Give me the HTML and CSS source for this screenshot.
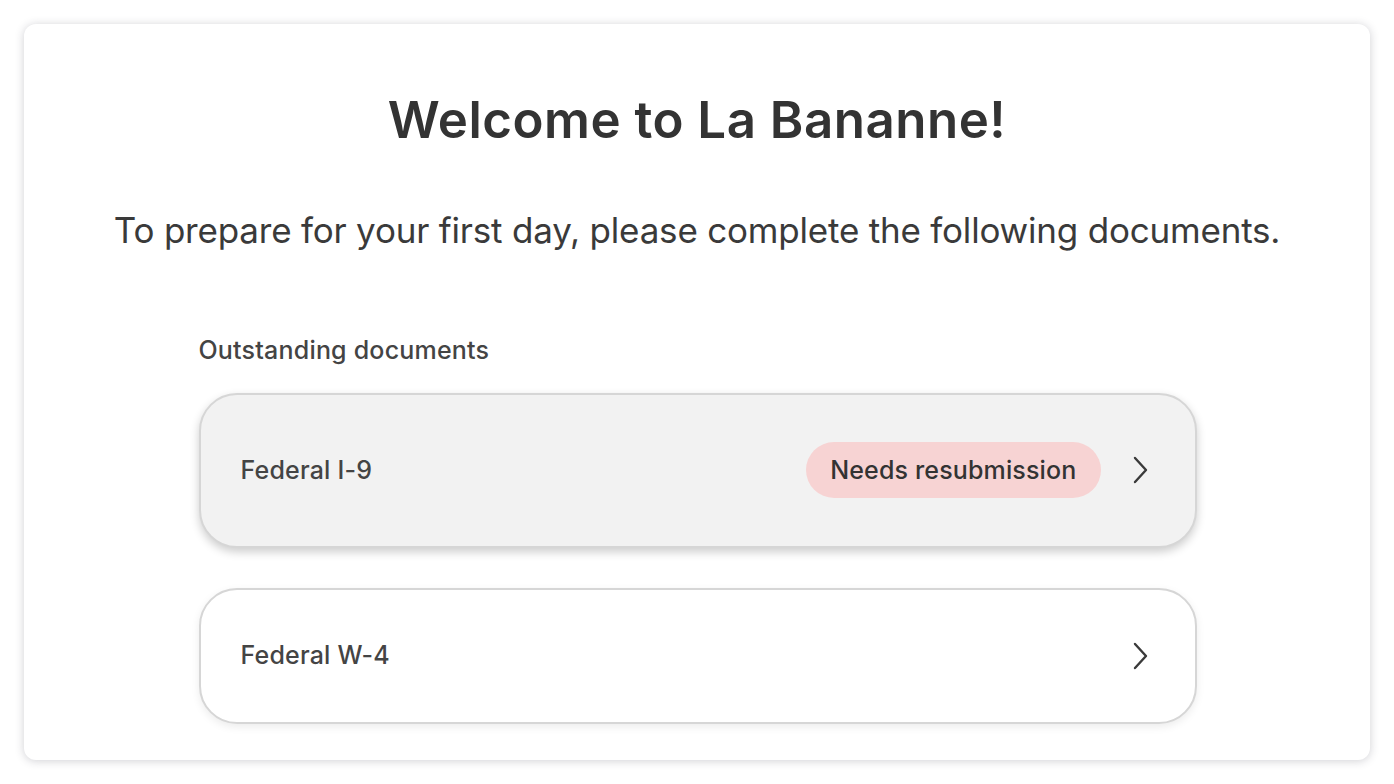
FILE: index.html
```html
<!DOCTYPE html>
<html lang="en">
<head>
<meta charset="utf-8">
<title>Welcome</title>
<link rel="stylesheet" href="styles.css">
</head>
<body>
<main class="card">
  <h1 class="title">Welcome to La Bananne!</h1>
  <p class="subtitle">To prepare for your first day, please complete the following documents.</p>
  <section class="docs">
    <h2 class="docs-heading">Outstanding documents</h2>
    <div class="doc-list">
      <a class="doc-row doc-row--active" href="#">
        <span class="doc-name">Federal I-9</span>
        <span class="doc-right">
          <span class="pill">Needs resubmission</span>
          <svg class="chevron" width="18" height="28" viewBox="0 0 18 28" aria-hidden="true"><path d="M4 2 L15 14 L4 26" fill="none" stroke="#3a3a3a" stroke-width="2.4" stroke-linecap="round" stroke-linejoin="round"/></svg>
        </span>
      </a>
      <a class="doc-row" href="#">
        <span class="doc-name">Federal W-4</span>
        <span class="doc-right">
          <svg class="chevron" width="18" height="28" viewBox="0 0 18 28" aria-hidden="true"><path d="M4 2 L15 14 L4 26" fill="none" stroke="#3a3a3a" stroke-width="2.4" stroke-linecap="round" stroke-linejoin="round"/></svg>
        </span>
      </a>
    </div>
  </section>
</main>
</body>
</html>
```
FILE: styles.css
```css
* { box-sizing: border-box; }
html, body { margin: 0; padding: 0; background: #ffffff; }
body {
  padding: 24px;
  font-family: Inter, "Noto Sans", "Liberation Sans", sans-serif;
  color: #333;
}
.card {
  width: 1346px;
  height: 736px;
  background: #fff;
  border-radius: 12px;
  box-shadow: 0 1px 10px rgba(40, 40, 60, 0.22);
  padding: 66px 0 0;
  display: flex;
  flex-direction: column;
  align-items: center;
}
.title {
  margin: 0;
  font-size: 51px;
  font-weight: 600;
  line-height: 60px;
  color: #333;
  letter-spacing: 0.5px;
}
.subtitle {
  margin: 58px 0 0;
  font-size: 35px;
  font-weight: 400;
  line-height: 44px;
  color: #3a3a3a;
  letter-spacing: -0.2px;
}
.docs {
  width: 998px;
  margin-top: 83px;
  margin-left: 1px;
}
.docs-heading {
  margin: 0 0 28px;
  font-size: 25px;
  font-weight: 500;
  line-height: 30px;
  color: #444;
  letter-spacing: 0.2px;
}
.doc-list {
  display: flex;
  flex-direction: column;
  gap: 40px;
}
.doc-row {
  display: flex;
  align-items: center;
  justify-content: space-between;
  padding: 49px 46px 50px 40px;
  border: 2px solid #d6d6d6;
  border-radius: 38px;
  background: #fff;
  text-decoration: none;
  color: #444;
  box-shadow: 0 3px 8px rgba(0, 0, 0, 0.08);
}
.doc-row--active {
  background: #f2f2f2;
  padding-top: 47px;
  padding-bottom: 48px;
  box-shadow: 0 4px 10px rgba(0, 0, 0, 0.2);
}
.doc-name {
  font-size: 25px;
  font-weight: 500;
  line-height: 33px;
  color: #444;
  letter-spacing: 0.2px;
}
.doc-right {
  display: flex;
  align-items: center;
  gap: 30px;
}
.pill {
  display: inline-flex;
  align-items: center;
  height: 56px;
  padding: 0 24px;
  border-radius: 28px;
  background: #f7d3d3;
  font-size: 25px;
  font-weight: 500;
  color: #333;
  letter-spacing: 0.15px;
}
.chevron { display: block; }
```
